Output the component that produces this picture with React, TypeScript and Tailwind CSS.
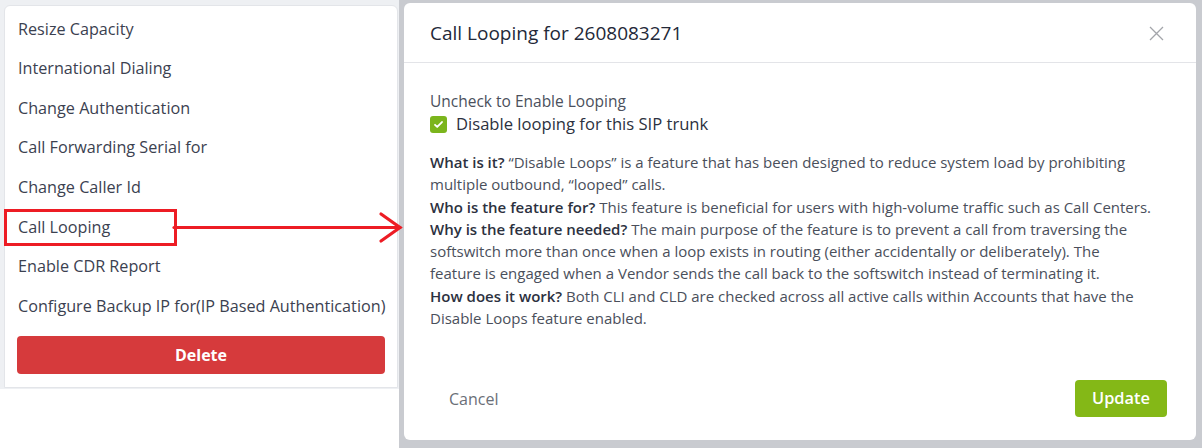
import React from "react";

const menuItems = [
  "Resize Capacity",
  "International Dialing",
  "Change Authentication",
  "Call Forwarding Serial for",
  "Change Caller Id",
  "Call Looping",
  "Enable CDR Report",
  "Configure Backup IP for(IP Based Authentication)",
];

interface Faq {
  q: string;
  a: string;
}

const faqs: Faq[] = [
  {
    q: "What is it?",
    a: "\u201CDisable Loops\u201D is a feature that has been designed to reduce system load by prohibiting multiple outbound, \u201Clooped\u201D calls.",
  },
  {
    q: "Who is the feature for?",
    a: "This feature is beneficial for users with high-volume traffic such as Call Centers.",
  },
  {
    q: "Why is the feature needed?",
    a: "The main purpose of the feature is to prevent a call from traversing the softswitch more than once when a loop exists in routing (either accidentally or deliberately). The feature is engaged when a Vendor sends the call back to the softswitch instead of terminating it.",
  },
  {
    q: "How does it work?",
    a: "Both CLI and CLD are checked across all active calls within Accounts that have the Disable Loops feature enabled.",
  },
];

function ActionMenu() {
  return (
    <div className="relative flex h-[383px] w-[394px] flex-col rounded-t-md border border-[#e3e5e9] bg-white pt-[3px]">
      {menuItems.map((item) => (
        <div
          key={item}
          className="flex h-[39.6px] items-center pl-[13px] text-[16.2px] text-[#3b4150]"
        >
          {item}
        </div>
      ))}
      <button className="mx-[12px] mt-[10px] h-[38px] rounded-[4px] bg-[#d63a3c] text-[16px] font-bold text-white">
        Delete
      </button>
    </div>
  );
}

function CheckIcon() {
  return (
    <span className="flex h-[17px] w-[17px] items-center justify-center rounded-[3px] bg-[#7bb51c]">
      <svg width="11" height="11" viewBox="0 0 12 12" fill="none">
        <path
          d="M2.2 6.3l2.4 2.4 5.2-5.4"
          stroke="white"
          strokeWidth="2"
          strokeLinecap="round"
          strokeLinejoin="round"
        />
      </svg>
    </span>
  );
}

function LoopingModal() {
  return (
    <div className="flex h-[437px] flex-col rounded-md bg-white">
      <div className="flex h-[60px] items-center justify-between border-b border-[#e3e4e8] pl-[26px] pr-[32px] pt-[2px]">
        <h2 className="text-[19px] text-[#232838]">Call Looping for 2608083271</h2>
        <svg width="15" height="15" viewBox="0 0 15 15" stroke="#a3a5aa" strokeWidth="1.3">
          <path d="M1 1l13 13M14 1L1 14" />
        </svg>
      </div>
      <div className="flex flex-1 flex-col px-[26px] pt-[28px]">
        <div className="text-[15.5px] leading-[20px] text-[#4b505c]">Uncheck to Enable Looping</div>
        <label className="mt-[2px] flex h-[22px] items-center gap-[9px] text-[16.6px] text-[#2c3140]">
          <CheckIcon />
          Disable looping for this SIP trunk
        </label>
        <div className="mt-[16px] w-[722px] text-[15px] leading-[22.3px] text-[#4a4f5b]">
          {faqs.map((f) => (
            <p key={f.q}>
              <b className="font-semibold text-[#2c3140]">{f.q}</b> {f.a}
            </p>
          ))}
        </div>
        <div className="mt-auto flex items-center justify-between pb-[23px] pr-[3px]">
          <button className="pl-[19px] text-[16px] text-[#6b6f78]">Cancel</button>
          <button className="h-[37px] w-[92px] rounded-[4px] bg-[#84b817] text-[16.4px] font-semibold text-white">
            Update
          </button>
        </div>
      </div>
    </div>
  );
}

export default function App() {
  return (
    <div
      className="relative flex h-[448px] w-[1202px] overflow-hidden bg-white"
      style={{ fontFamily: '"Open Sans", "Noto Sans", sans-serif' }}
    >
      <div className="flex w-[399px] flex-col">
        <div className="h-[389px] bg-[#eef0f3] pl-[4px] pt-[5px]">
          <ActionMenu />
        </div>
      </div>
      <div className="flex-1 bg-[#c9cbd0] pl-[5px] pr-[6px] pt-[3px]">
        <LoopingModal />
      </div>
      <div className="pointer-events-none absolute left-[4px] top-[209px] h-[37px] w-[173px] border-[3px] border-[#ed1c24]" />
      <svg
        className="pointer-events-none absolute left-[170px] top-[208px]"
        width="240"
        height="40"
        viewBox="0 0 240 40"
        fill="none"
        stroke="#ed1c24"
        strokeWidth="3.2"
        strokeLinecap="round"
      >
        <path d="M4 19.5H230" />
        <path d="M211 6l19 13.5-19 13.5" />
      </svg>
    </div>
  );
}
